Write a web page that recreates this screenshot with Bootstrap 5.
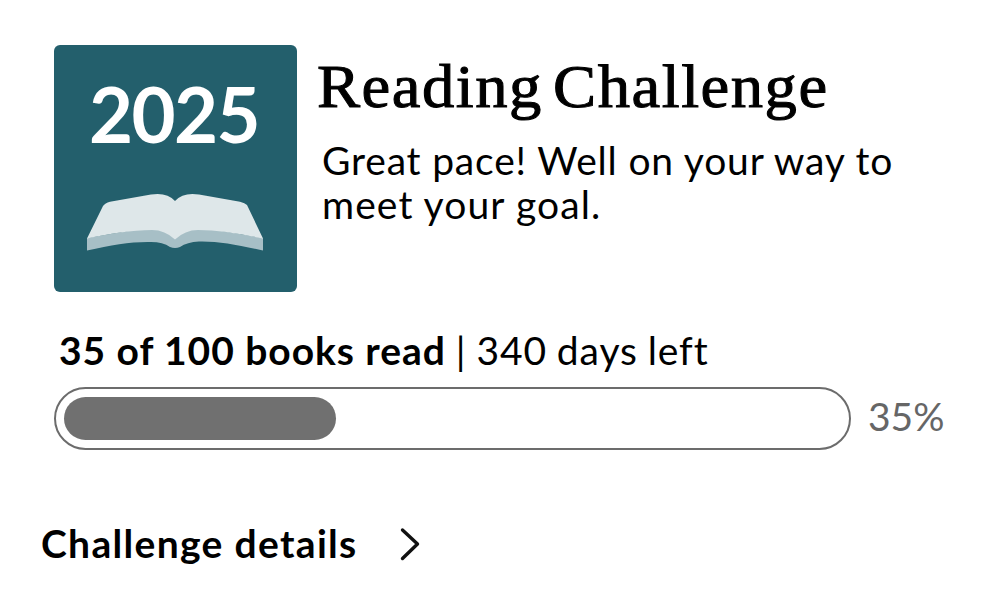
<!DOCTYPE html>
<html lang="en">
<head>
    <meta charset="UTF-8">
    <meta name="viewport" content="width=device-width, initial-scale=1.0">
    <link href="https://cdn.jsdelivr.net/npm/bootstrap@5.3.3/dist/css/bootstrap.min.css" rel="stylesheet">
    <title>Reading Challenge</title>
    <style>
        body { font-family: Lato, sans-serif; font-size: 39px; line-height: 44px; color: #000; }
        .challenge { padding: 45px 48px 0 54px; }
        .year-tile { width: 243px; height: 247px; background: #235f6c; border-radius: 6px; }
        .year { font-size: 76px; font-weight: 700; line-height: 76px; padding: 31px 3px 0 0; color: #fff; text-align: center; letter-spacing: -1.6px; }
        .book-art { width: 178px; height: 59px; margin: 41px 0 0 32px; }
        .challenge-text { padding: 12px 0 0 20px; }
        .challenge-title { font-family: "Liberation Serif", serif; font-size: 61px; line-height: 60px; font-weight: 400; letter-spacing: 1.4px; word-spacing: -7px; -webkit-text-stroke: 1px #000; white-space: nowrap; transform: scaleX(1.06); transform-origin: left; }
        .pace { padding: 21px 0 0 5px; letter-spacing: 0.82px; white-space: nowrap; }
        .pace-end { letter-spacing: 1.1px; }
        .stats { padding: 36px 0 0 5px; white-space: nowrap; }
        .stats-read { font-weight: 700; letter-spacing: 0.95px; }
        .stats-left { letter-spacing: 0.9px; word-spacing: -1px; }
        .goal-bar { width: 797px; height: 63px; padding: 8px; background: #fff; border: 2px solid #6c6c6c; border-radius: 32px; }
        .goal-bar .progress-bar { background: #707070; border-radius: 22px; }
        .goal-row { margin-top: 15px; }
        .percent { color: #666; padding-bottom: 6px; margin-left: 17px; }
        .details { padding-top: 71px; margin-left: -13px; font-weight: 700; letter-spacing: 1.32px; }
        .details-chevron { margin: 2px 0 0 42px; }
    </style>
</head>
<body>
    <section class="challenge">
        <div class="d-flex">
            <div class="year-tile flex-shrink-0">
                <div class="year">2025</div>
                <svg class="book-art d-block" viewBox="0 0 178 59">
                    <path fill="#a7bfc6" d="M1 45L1 57.500C26 52 46 48.500 65 49Q77 49 84 54Q89 56 94 54Q101 49 113 48.500C132 48 152 52 177 57.500L177 45L89 30Z"/>
                    <path fill="#dee7e9" d="M1 45.500L17 13Q19 10 24 8.700L65 1.500Q81-1 89 8Q97-1 113 1.500L154 8.700Q159 10 161 12L177 45.500C155 41 132 37 112 37Q99 37 89 46.500Q79 37 66 37C46 37 23 41 1 45.500Z"/>
                </svg>
            </div>
            <div class="challenge-text">
                <h1 class="challenge-title mb-0">Reading Challenge</h1>
                <p class="pace mb-0">Great pace! Well on your way to<br><span class="pace-end">meet your goal.</span></p>
            </div>
        </div>
        <div class="stats"><span class="stats-read">35 of 100 books read</span> <span class="stats-left">| 340 days left</span></div>
        <div class="goal-row d-flex align-items-center">
            <div class="progress goal-bar flex-shrink-0">
                <div class="progress-bar" style="width: 35%"></div>
            </div>
            <span class="percent">35%</span>
        </div>
        <a href="#" class="details d-flex align-items-center text-reset text-decoration-none">
            <span class="details-label">Challenge details</span>
            <svg class="details-chevron" width="20" height="34" viewBox="0 0 20 34" fill="none" stroke="#111" stroke-width="3.400" stroke-linecap="round" stroke-linejoin="round"><path d="M2.500 3L17.500 17L2.500 31.500"/></svg>
        </a>
    </section>
    <script src="https://cdn.jsdelivr.net/npm/bootstrap@5.3.3/dist/js/bootstrap.bundle.min.js"></script>
</body>
</html>
